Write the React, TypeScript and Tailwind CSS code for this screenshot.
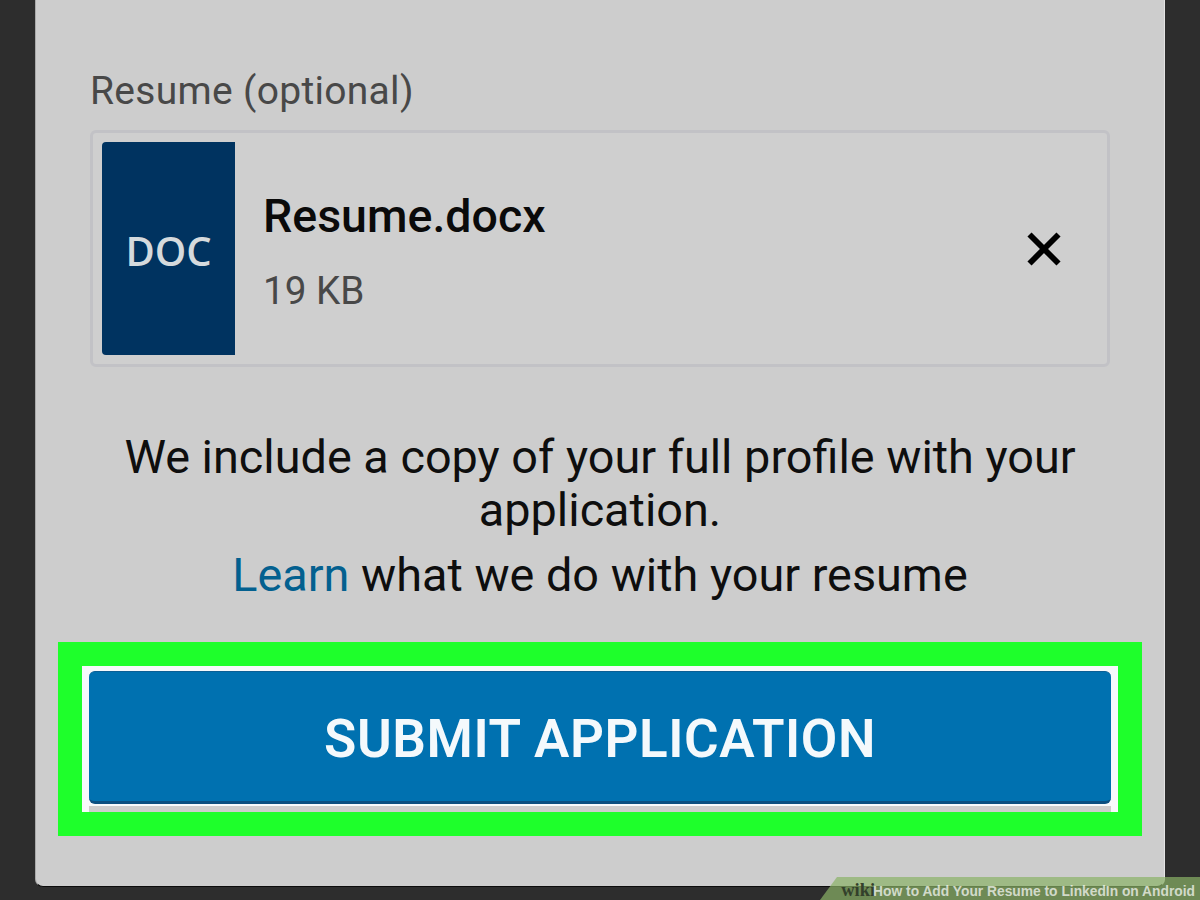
import { X } from "lucide-react";

export default function App() {
  return (
    <div className="relative h-[900px] w-[1200px] overflow-hidden bg-[#2d2d2d] font-['Roboto',sans-serif]">
      <div className="ml-[35px] h-[887px] w-[1130px] rounded-b-lg border-l border-r border-b border-l-[#a9a9a9] border-r-[#e4e4e4] border-b-[#0c0c0c] bg-[#cdcdcd] px-[54px] pt-[69px]">
        <div className="text-[39px] leading-[44px] tracking-[0.3px] text-[#484848]">Resume (optional)</div>

        <div className="mt-[17px] flex h-[237px] items-center rounded-md border-[3px] border-[#c2c2c6] bg-[#cfcfcf] pl-[9px]">
          <div className="flex h-[213px] w-[133px] items-center justify-center rounded-l bg-[#003360] pt-[4px]">
            <span className="font-['Open_Sans',sans-serif] text-[40px] font-semibold leading-none text-[#d5dadd]">DOC</span>
          </div>
          <div className="ml-[28px] flex-1 pt-[7px]">
            <div className="text-[46.5px] font-medium leading-[48px] text-[#0a0a0a]">Resume.docx</div>
            <div className="mt-[30px] text-[38.7px] leading-[42px] text-[#484848]">19 KB</div>
          </div>
          <X className="mr-[34px] text-black" size={58} strokeWidth={2.4} strokeLinecap="butt" />
        </div>

        <div className="mt-[64px] text-center text-[46.8px] leading-[53px] text-[#0e0e0e]">
          <p>We include a copy of your full profile with your</p>
          <p>application.</p>
          <p className="mt-[12px]">
            <span className="text-[#03608f]">Learn</span> what we do with your resume
          </p>
        </div>

        <div className="mt-[40px] -mx-[32px] h-[194px] bg-[#1eff2b] p-[24px]">
          <div className="h-[146px] bg-[#f7f9fb] px-[7px] pt-[5px]">
            <button className="flex h-[133px] w-full items-center justify-center rounded-md border-t border-b-[3px] border-t-[#0b5f95] border-b-[#0b4f80] bg-[#0071b0] pt-[6px] text-[53px] font-semibold leading-none tracking-[0.55px] text-[#f4f9fc]">
              SUBMIT APPLICATION
            </button>
            <div className="mt-[2px] h-[6px] bg-[#cdcdcd]" />
          </div>
        </div>
      </div>

      <div className="absolute bottom-0 right-0 flex h-[23px] w-[380px] items-center justify-end">
        <div className="absolute inset-0 bg-[#8ab266]/70 [clip-path:polygon(17px_0,100%_0,100%_100%,0_100%)]" />
        <div className="relative flex items-baseline whitespace-nowrap pr-[5px] pt-[3px] font-['Liberation_Sans',sans-serif] text-[13.8px] font-bold leading-none">
          <span className="font-['Liberation_Serif',serif] text-[18.5px] text-[#33402b]">wiki</span>
          <span className="-ml-[2px] text-white/70">How to Add Your Resume to LinkedIn on Android</span>
        </div>
      </div>
    </div>
  );
}
